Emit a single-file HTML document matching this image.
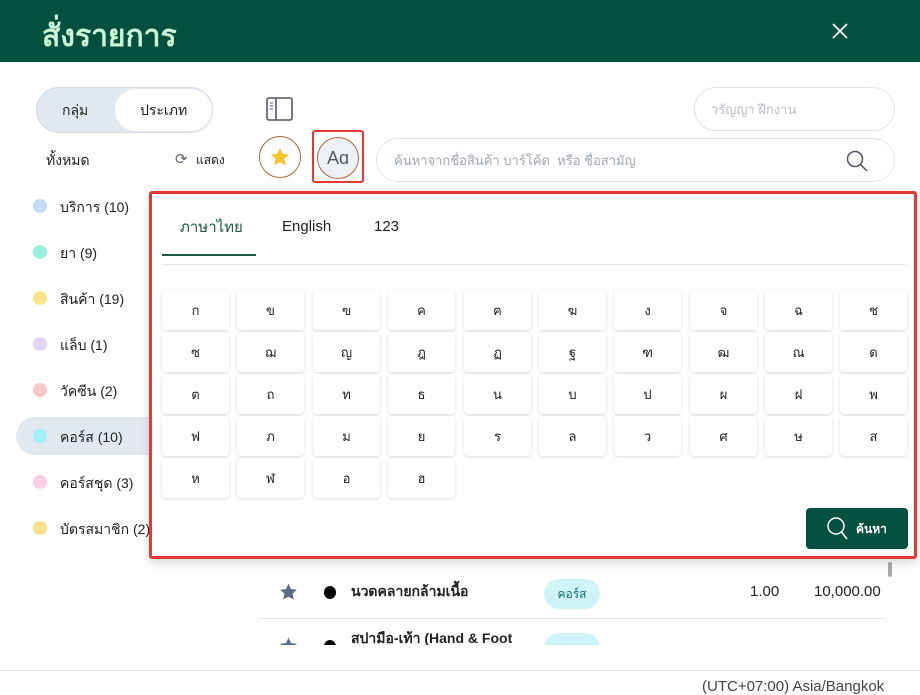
<!DOCTYPE html>
<html><head><meta charset="utf-8"><style>
*{box-sizing:border-box;margin:0;padding:0}
body{width:920px;height:694px;overflow:hidden;background:#fff;font-family:"Liberation Sans","Noto Sans CJK SC",sans-serif;position:relative;color:#222}
.a{position:absolute}
.hdr{left:0;top:0;width:920px;height:62px;background:#03503f}
.dot{width:14px;height:14px;border-radius:50%}
.cat{font-size:14px;color:#222}
.key{position:absolute;width:67px;height:40px;background:#fff;border-radius:4px;box-shadow:0 1px 3px rgba(0,0,0,.15);font-size:13px;display:flex;align-items:center;justify-content:center;color:#222}
</style></head><body>
<div class="a hdr"></div>
<div class="a" style="left:42px;top:13px;font-size:30px;font-weight:bold;color:#c9f5d6">สั่งรายการ</div>
<svg class="a" style="left:832px;top:23px" width="16" height="16" viewBox="0 0 16 16"><path d="M1 1L15 15M15 1L1 15" stroke="#fff" stroke-width="1.8"/></svg>

<div class="a" style="left:36px;top:87px;width:177px;height:46px;border-radius:23px;background:#e2e8f0;border:1px solid #d4dbe5"></div>
<div class="a" style="left:115px;top:89px;width:97px;height:42px;border-radius:21px;background:#fff"></div>
<div class="a" style="left:62px;top:100px;font-size:14px">กลุ่ม</div>
<div class="a" style="left:140px;top:100px;font-size:14px">ประเภท</div>
<svg class="a" style="left:266px;top:97px" width="27" height="24" viewBox="0 0 27 24"><rect x="1" y="1" width="25" height="22" rx="2" fill="none" stroke="#556" stroke-width="1.6"/><line x1="10" y1="1" x2="10" y2="23" stroke="#556" stroke-width="1.6"/><line x1="4" y1="6" x2="7" y2="6" stroke="#556"/><line x1="4" y1="9" x2="7" y2="9" stroke="#556"/><line x1="4" y1="12" x2="7" y2="12" stroke="#556"/></svg>

<div class="a" style="left:694px;top:87px;width:201px;height:44px;border-radius:22px;border:1px solid #dde3ec"></div>
<div class="a" style="left:711px;top:99px;font-size:13px;color:#b8bfca">วรัญญา ฝึกงาน</div>

<div class="a" style="left:46px;top:150px;font-size:14px">ทั้งหมด</div>
<div class="a" style="left:175px;top:150px;font-size:15px;color:#667">⟳</div>
<div class="a" style="left:196px;top:151px;font-size:12px">แสดง</div>

<div class="a" style="left:259px;top:136px;width:42px;height:42px;border-radius:50%;border:1px solid #b5673a;display:flex;align-items:center;justify-content:center"><svg width="22" height="22" viewBox="0 0 24 24"><path d="M12 2l3 6.5 7 .8-5.2 4.8 1.5 7L12 17.5 5.7 21l1.5-7L2 9.3l7-.8z" fill="#f7c52b"/></svg></div>
<div class="a" style="left:312px;top:130px;width:52px;height:53px;border:2px solid #e53935;border-radius:3px"></div>
<div class="a" style="left:317px;top:137px;width:42px;height:42px;border-radius:50%;border:1px solid #b5673a;background:#edf0f4;font-size:18px;color:#556;display:flex;align-items:center;justify-content:center">Aɑ</div>

<div class="a" style="left:376px;top:138px;width:519px;height:44px;border-radius:22px;border:1px solid #dde3ec"></div>
<div class="a" style="left:394px;top:150px;font-size:13px;color:#a0a8b4">ค้นหาจากชื่อสินค้า บาร์โค้ด &nbsp;หรือ ชื่อสามัญ</div>
<svg class="a" style="left:845px;top:149px" width="24" height="24" viewBox="0 0 24 24"><circle cx="10" cy="10" r="7.5" fill="none" stroke="#556" stroke-width="1.5"/><line x1="15.5" y1="15.5" x2="22" y2="22" stroke="#556" stroke-width="1.5"/></svg>

<div class="a dot" style="left:33px;top:199px;background:#c4dafb"></div><div class="a cat" style="left:60px;top:197px">บริการ (10)</div>
<div class="a dot" style="left:33px;top:245px;background:#98f0dc"></div><div class="a cat" style="left:60px;top:243px">ยา (9)</div>
<div class="a dot" style="left:33px;top:291px;background:#fbe689"></div><div class="a cat" style="left:60px;top:289px">สินค้า (19)</div>
<div class="a dot" style="left:33px;top:337px;background:#e2d1fb"></div><div class="a cat" style="left:60px;top:335px">แล็บ (1)</div>
<div class="a dot" style="left:33px;top:383px;background:#fcc9c9"></div><div class="a cat" style="left:60px;top:381px">วัคซีน (2)</div>
<div class="a" style="left:16px;top:417px;width:140px;height:38px;border-radius:19px 0 0 19px;background:#e2e8f0"></div>
<div class="a dot" style="left:33px;top:429px;background:#a3f0fa"></div><div class="a cat" style="left:60px;top:427px">คอร์ส (10)</div>
<div class="a dot" style="left:33px;top:475px;background:#fbcfe6"></div><div class="a cat" style="left:60px;top:473px">คอร์สชุด (3)</div>
<div class="a dot" style="left:33px;top:521px;background:#fbe08a"></div><div class="a cat" style="left:60px;top:519px">บัตรสมาชิก (2)</div>

<div class="a" style="left:258px;top:618px;width:628px;height:1px;background:#e3e8ef"></div>
<svg class="a" style="left:278px;top:582px" width="21" height="20" viewBox="0 0 24 24"><path d="M12 2l3 6.5 7 .8-5.2 4.8 1.5 7L12 17.5 5.7 21l1.5-7L2 9.3l7-.8z" fill="#5c6a85"/></svg>
<div class="a" style="left:324px;top:586px;width:12px;height:13px;border-radius:50%;background:#000"></div>
<div class="a" style="left:351px;top:581px;font-size:14px;font-weight:bold">นวดคลายกล้ามเนื้อ</div>
<div class="a" style="left:544px;top:579px;width:56px;height:30px;border-radius:15px;background:#cff4f8;font-size:12px;display:flex;align-items:center;justify-content:center;color:#1b6b73">คอร์ส</div>
<div class="a" style="left:750px;top:583px;font-size:15px">1.00</div>
<div class="a" style="left:814px;top:583px;font-size:15px">10,000.00</div>
<div class="a" style="left:888px;top:562px;width:4px;height:15px;background:#aaa;border-radius:2px"></div>
<svg class="a" style="left:278px;top:636px" width="21" height="20" viewBox="0 0 24 24"><path d="M12 2l3 6.5 7 .8-5.2 4.8 1.5 7L12 17.5 5.7 21l1.5-7L2 9.3l7-.8z" fill="#5c6a85"/></svg>
<div class="a" style="left:324px;top:640px;width:12px;height:13px;border-radius:50%;background:#000"></div>
<div class="a" style="left:544px;top:633px;width:56px;height:30px;border-radius:15px;background:#cff4f8"></div>
<div class="a" style="left:351px;top:628px;font-size:14px;font-weight:bold;height:17px;overflow:hidden">สปามือ-เท้า (Hand &amp; Foot</div>
<div class="a" style="left:258px;top:645px;width:640px;height:25px;background:#fff"></div>
<div class="a" style="left:0;top:670px;width:920px;height:1px;background:#e3e8ef"></div>
<div class="a" style="left:702px;top:678px;font-size:15px;color:#444">(UTC+07:00) Asia/Bangkok</div>

<div class="a" style="left:149px;top:191px;width:768px;height:368px;background:#fff;border:3px solid #e53935;border-radius:3px;box-shadow:0 4px 10px rgba(0,0,0,.15)"></div>
<div class="a" style="left:180px;top:215px;font-size:15px;color:#1b5a44">ภาษาไทย</div>
<div class="a" style="left:282px;top:218px;font-size:15px">English</div>
<div class="a" style="left:374px;top:218px;font-size:15px">123</div>
<div class="a" style="left:162px;top:254px;width:94px;height:2px;background:#1b5a44"></div>
<div class="a" style="left:162px;top:264px;width:744px;height:1px;background:#e3e8ef"></div>

<div class="key" style="left:162px;top:290px">ก</div><div class="key" style="left:237px;top:290px">ข</div><div class="key" style="left:313px;top:290px">ฃ</div><div class="key" style="left:388px;top:290px">ค</div><div class="key" style="left:464px;top:290px">ฅ</div><div class="key" style="left:539px;top:290px">ฆ</div><div class="key" style="left:614px;top:290px">ง</div><div class="key" style="left:690px;top:290px">จ</div><div class="key" style="left:765px;top:290px">ฉ</div><div class="key" style="left:840px;top:290px">ช</div>
<div class="key" style="left:162px;top:332px">ซ</div><div class="key" style="left:237px;top:332px">ฌ</div><div class="key" style="left:313px;top:332px">ญ</div><div class="key" style="left:388px;top:332px">ฎ</div><div class="key" style="left:464px;top:332px">ฏ</div><div class="key" style="left:539px;top:332px">ฐ</div><div class="key" style="left:614px;top:332px">ฑ</div><div class="key" style="left:690px;top:332px">ฒ</div><div class="key" style="left:765px;top:332px">ณ</div><div class="key" style="left:840px;top:332px">ด</div>
<div class="key" style="left:162px;top:374px">ต</div><div class="key" style="left:237px;top:374px">ถ</div><div class="key" style="left:313px;top:374px">ท</div><div class="key" style="left:388px;top:374px">ธ</div><div class="key" style="left:464px;top:374px">น</div><div class="key" style="left:539px;top:374px">บ</div><div class="key" style="left:614px;top:374px">ป</div><div class="key" style="left:690px;top:374px">ผ</div><div class="key" style="left:765px;top:374px">ฝ</div><div class="key" style="left:840px;top:374px">พ</div>
<div class="key" style="left:162px;top:416px">ฟ</div><div class="key" style="left:237px;top:416px">ภ</div><div class="key" style="left:313px;top:416px">ม</div><div class="key" style="left:388px;top:416px">ย</div><div class="key" style="left:464px;top:416px">ร</div><div class="key" style="left:539px;top:416px">ล</div><div class="key" style="left:614px;top:416px">ว</div><div class="key" style="left:690px;top:416px">ศ</div><div class="key" style="left:765px;top:416px">ษ</div><div class="key" style="left:840px;top:416px">ส</div>
<div class="key" style="left:162px;top:458px">ห</div><div class="key" style="left:237px;top:458px">ฬ</div><div class="key" style="left:313px;top:458px">อ</div><div class="key" style="left:388px;top:458px">ฮ</div>

<div class="a" style="left:806px;top:508px;width:102px;height:41px;border-radius:4px;background:#03503f"></div>
<svg class="a" style="left:826px;top:516px" width="24" height="26" viewBox="0 0 24 26"><circle cx="10" cy="10" r="8" fill="none" stroke="#fff" stroke-width="1.5"/><line x1="15.5" y1="16" x2="21" y2="23" stroke="#fff" stroke-width="1.5"/></svg>
<div class="a" style="left:856px;top:520px;font-size:12px;font-weight:bold;color:#fff">ค้นหา</div>
</body></html>
